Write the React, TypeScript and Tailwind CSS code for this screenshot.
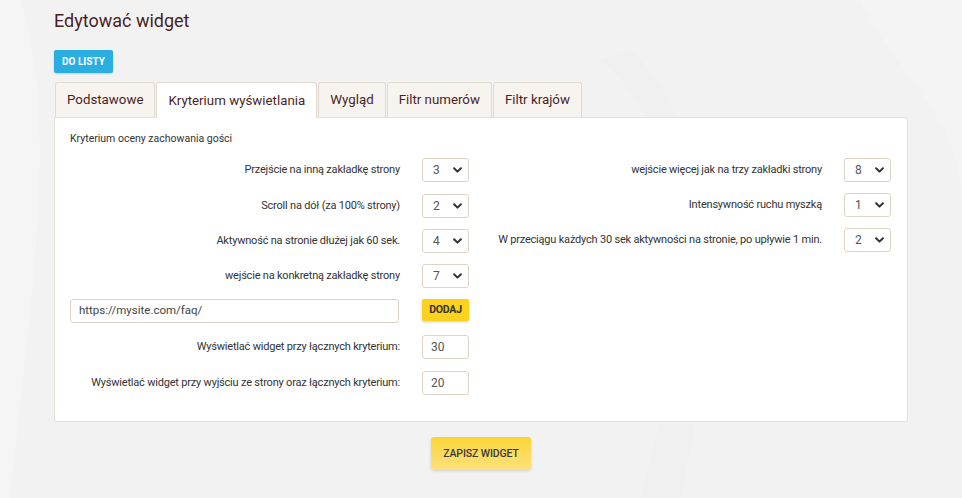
import { ReactNode } from 'react';

const font = { fontFamily: 'Roboto, "Liberation Sans", sans-serif' };

function Chevron() {
  return (
    <svg width="9" height="6" viewBox="0 0 9 6" className="shrink-0">
      <path d="M1.1 1.2 L4.5 4.6 L7.9 1.2" fill="none" stroke="#333" strokeWidth="2" strokeLinecap="round" strokeLinejoin="round" />
    </svg>
  );
}

function SelectBox({ value }: { value: string }) {
  return (
    <div className="w-[47px] h-[24px] shrink-0 border border-[#ddd4c6] rounded-[3px] bg-white flex items-center justify-between pl-[10px] pr-[6px] text-[12px] text-[#555]">
      <span>{value}</span>
      <Chevron />
    </div>
  );
}

function NumberBox({ value }: { value: string }) {
  return (
    <div className="w-[47px] h-[24px] shrink-0 border border-[#ddd4c6] rounded-[3px] bg-white flex items-center pl-[8px] text-[12px] text-[#555]">
      {value}
    </div>
  );
}

function Row({ label, children }: { label: string; children: ReactNode }) {
  return (
    <div className="flex items-center justify-end h-[24px] gap-[22px]">
      <span className="text-[11px] tracking-[-0.2px] text-[#333] text-right whitespace-nowrap">{label}</span>
      {children}
    </div>
  );
}

const tabs = ['Podstawowe', 'Kryterium wyświetlania', 'Wygląd', 'Filtr numerów', 'Filtr krajów'];

export default function App() {
  return (
    <div className="relative w-full min-h-[498px] bg-[#f2f2f2] overflow-hidden" style={font}>
      {/* faint background swirls */}
      <svg className="absolute inset-0 w-full h-full pointer-events-none" viewBox="0 0 962 498" preserveAspectRatio="none">
        <path d="M20 0 C 60 120, 30 300, 10 498 L 0 498 L 0 0 Z" fill="#f5f5f5" />
        <path d="M600 60 C 680 120, 700 300, 640 498 L 680 498 C 730 300, 710 120, 630 50 Z" fill="#f0f0f0" />
        <path d="M860 0 C 900 80, 962 120, 962 200 L 962 0 Z" fill="#f4f4f4" />
      </svg>

      <div className="relative pl-[54px] pr-[54px]">
        <h1 className="pt-[10px] text-[18px] leading-[22px] text-[#4a1f1f]">Edytować widget</h1>

        <button className="mt-[18px] h-[23px] w-[59px] rounded-[2px] bg-[#2aaee2] text-white text-[10px] font-bold uppercase shadow-[0_1px_2px_rgba(0,0,0,0.15)]">
          Do listy
        </button>

        <div className="mt-[9px] flex items-end gap-[1px] pl-[1px]">
          {tabs.map((t, i) => (
            <div
              key={t}
              className={`px-[11px] flex items-center text-[13.3px] text-[#4a1f1f] border border-b-0 border-[#e2dace] rounded-t-[3px] ${
                i === 1 ? 'bg-white relative -mb-[1px] h-[36px]' : 'bg-[#f7f4ef] h-[35px]'
              }`}
            >
              {t}
            </div>
          ))}
        </div>

        <div className="bg-white border border-[#e4e0da] rounded-b-[3px] rounded-tr-[3px] pl-[15px] pr-[16px] pt-[14px] pb-[26px]">
          <div className="text-[10.5px] leading-[14px] text-[#333]">Kryterium oceny zachowania gości</div>

          <div className="mt-[12px] flex justify-between">
            <div className="w-[399px] flex flex-col gap-[11px]">
              <Row label="Przejście na inną zakładkę strony"><SelectBox value="3" /></Row>
              <div className="mt-[1px]">
                <Row label="Scroll na dół (za 100% strony)"><SelectBox value="2" /></Row>
              </div>
              <Row label="Aktywność na stronie dłużej jak 60 sek."><SelectBox value="4" /></Row>
              <Row label="wejście na konkretną zakładkę strony"><SelectBox value="7" /></Row>
              <div className="flex items-center justify-between h-[24px]">
                <div className="w-[329px] h-[24px] border border-[#ddd4c6] rounded-[3px] flex items-center pl-[8px] text-[11.5px] text-[#444]">
                  https://mysite.com/faq/
                </div>
                <button className="w-[47px] h-[22px] self-start rounded-[2px] bg-[#fdd21f] text-[10.5px] font-bold tracking-[-0.2px] text-[#333] shadow-[0_1px_3px_rgba(0,0,0,0.2)]">
                  DODAJ
                </button>
              </div>
              <div className="mt-[1px]">
                <Row label="Wyświetlać widget przy łącznych kryterium:"><NumberBox value="30" /></Row>
              </div>
              <div className="mt-[1px]">
                <Row label="Wyświetlać widget przy wyjściu ze strony oraz łącznych kryterium:"><NumberBox value="20" /></Row>
              </div>
            </div>

            <div className="w-[400px] flex flex-col gap-[11px]">
              <Row label="wejście więcej jak na trzy zakładki strony"><SelectBox value="8" /></Row>
              <Row label="Intensywność ruchu myszką"><SelectBox value="1" /></Row>
              <Row label="W przeciągu każdych 30 sek aktywności na stronie, po upływie 1 min."><SelectBox value="2" /></Row>
            </div>
          </div>
        </div>

        <div className="flex justify-center mt-[15px]">
          <button className="w-[100px] h-[33px] rounded-[3px] bg-gradient-to-b from-[#fbd532] to-[#fee17a] text-[10.5px] font-medium tracking-[-0.1px] text-[#3a3a3a] shadow-[0_1px_3px_rgba(0,0,0,0.15)]">
            ZAPISZ WIDGET
          </button>
        </div>
      </div>
    </div>
  );
}
